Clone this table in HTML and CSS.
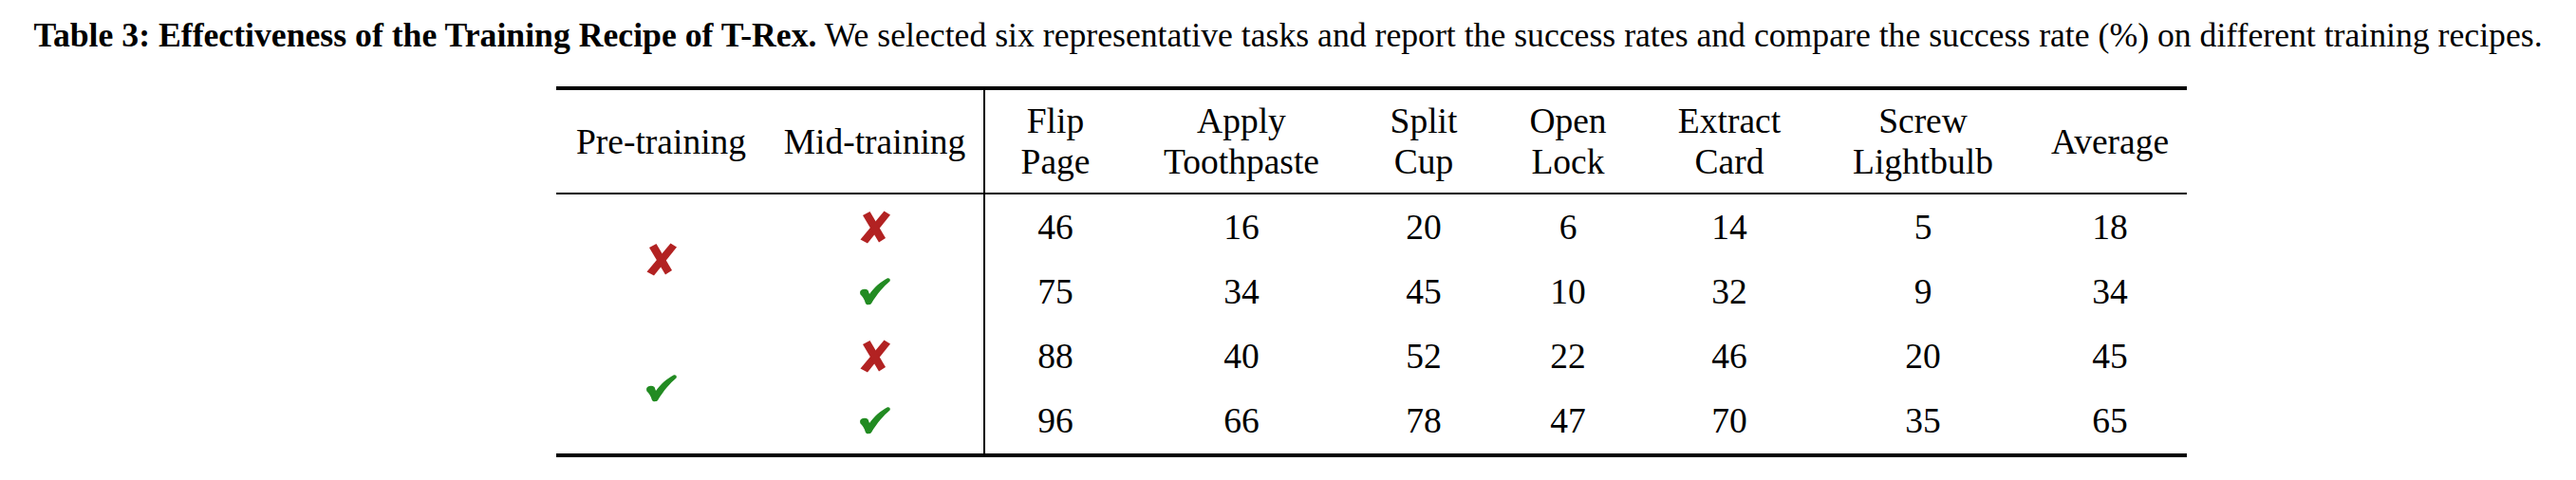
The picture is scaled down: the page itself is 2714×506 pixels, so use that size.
FILE: index.html
```html
<!DOCTYPE html>
<html>
<head>
<meta charset="utf-8">
<link rel="stylesheet" href="styles.css">
</head>
<body>
<p class="caption"><b>Table 3: Effectiveness of the Training Recipe of T-Rex.</b> We selected six representative tasks and report the success rates and compare the success rate (%) on different training recipes.</p>
<div class="tbl">
  <div class="cell head">Pre-training</div>
  <div class="cell head sep">Mid-training</div>
  <div class="cell head">Flip<br>Page</div>
  <div class="cell head">Apply<br>Toothpaste</div>
  <div class="cell head">Split<br>Cup</div>
  <div class="cell head">Open<br>Lock</div>
  <div class="cell head">Extract<br>Card</div>
  <div class="cell head">Screw<br>Lightbulb</div>
  <div class="cell head">Average</div>

  <div class="cell r1"><svg class="mark" width="32" height="35" viewBox="0 0 32 35"><path class="no" d="M25.5 0.5 L32 4.5 L8 34.5 L0.5 30.5 Z"/><path class="no" d="M3 5 L10.5 1 L27 29 L20 33.5 Z"/></svg></div>
  <div class="cell sep"><svg class="mark" width="32" height="35" viewBox="0 0 32 35"><path class="no" d="M25.5 0.5 L32 4.5 L8 34.5 L0.5 30.5 Z"/><path class="no" d="M3 5 L10.5 1 L27 29 L20 33.5 Z"/></svg></div>
  <div class="cell">46</div><div class="cell">16</div><div class="cell">20</div><div class="cell">6</div><div class="cell">14</div><div class="cell">5</div><div class="cell">18</div>

  <div class="cell sep"><svg class="mark" width="32" height="29" viewBox="0 0 32 29"><path class="yes" d="M0.3 14 C2 11.5 6 11 8.5 13 L10 17 C15 10 22 4 29 0.3 C31 -0.3 32.5 1.5 31.5 3.5 C25 9 18 17 12 27 C11 28.5 7 28.7 6 27 C4.5 22 2.5 19 0.5 17.5 C0 16.5 0 15 0.3 14 Z"/></svg></div>
  <div class="cell">75</div><div class="cell">34</div><div class="cell">45</div><div class="cell">10</div><div class="cell">32</div><div class="cell">9</div><div class="cell">34</div>

  <div class="cell r3"><svg class="mark" width="32" height="29" viewBox="0 0 32 29"><path class="yes" d="M0.3 14 C2 11.5 6 11 8.5 13 L10 17 C15 10 22 4 29 0.3 C31 -0.3 32.5 1.5 31.5 3.5 C25 9 18 17 12 27 C11 28.5 7 28.7 6 27 C4.5 22 2.5 19 0.5 17.5 C0 16.5 0 15 0.3 14 Z"/></svg></div>
  <div class="cell sep"><svg class="mark" width="32" height="35" viewBox="0 0 32 35"><path class="no" d="M25.5 0.5 L32 4.5 L8 34.5 L0.5 30.5 Z"/><path class="no" d="M3 5 L10.5 1 L27 29 L20 33.5 Z"/></svg></div>
  <div class="cell">88</div><div class="cell">40</div><div class="cell">52</div><div class="cell">22</div><div class="cell">46</div><div class="cell">20</div><div class="cell">45</div>

  <div class="cell sep"><svg class="mark" width="32" height="29" viewBox="0 0 32 29"><path class="yes" d="M0.3 14 C2 11.5 6 11 8.5 13 L10 17 C15 10 22 4 29 0.3 C31 -0.3 32.5 1.5 31.5 3.5 C25 9 18 17 12 27 C11 28.5 7 28.7 6 27 C4.5 22 2.5 19 0.5 17.5 C0 16.5 0 15 0.3 14 Z"/></svg></div>
  <div class="cell">96</div><div class="cell">66</div><div class="cell">78</div><div class="cell">47</div><div class="cell">70</div><div class="cell">35</div><div class="cell">65</div>
</div>
</body>
</html>
```

FILE: styles.css
```css
html, body {
  margin: 0;
  padding: 0;
  background: #ffffff;
}
body {
  width: 2714px;
  height: 506px;
  overflow: hidden;
  font-family: "Liberation Serif", "Times New Roman", serif;
  color: #000000;
}
.caption {
  margin: 0;
  padding-top: 17px;
  font-size: 35.7px;
  line-height: 41px;
  text-align: center;
  white-space: nowrap;
}
.caption b {
  font-weight: bold;
}
.tbl {
  margin-top: 33px;
  margin-left: 586px;
  width: 1718px;
  display: grid;
  grid-template-columns: 221px 231px 148px 244px 140px 164px 176px 232px 162px;
  grid-template-rows: 110px repeat(4, 68.25px);
  border-top: 4px solid #000;
  border-bottom: 4px solid #000;
  font-size: 37.5px;
  line-height: 43px;
}
.cell {
  display: flex;
  align-items: center;
  justify-content: center;
  text-align: center;
  box-sizing: border-box;
}
.head {
  border-bottom: 2px solid #000;
}
.sep {
  border-right: 2px solid #000;
}
.r1 {
  grid-column: 1;
  grid-row: 2 / span 2;
}
.r3 {
  grid-column: 1;
  grid-row: 4 / span 2;
}
.mark {
  display: block;
}
.no {
  fill: #b22222;
}
.yes {
  fill: #228b22;
}
```
